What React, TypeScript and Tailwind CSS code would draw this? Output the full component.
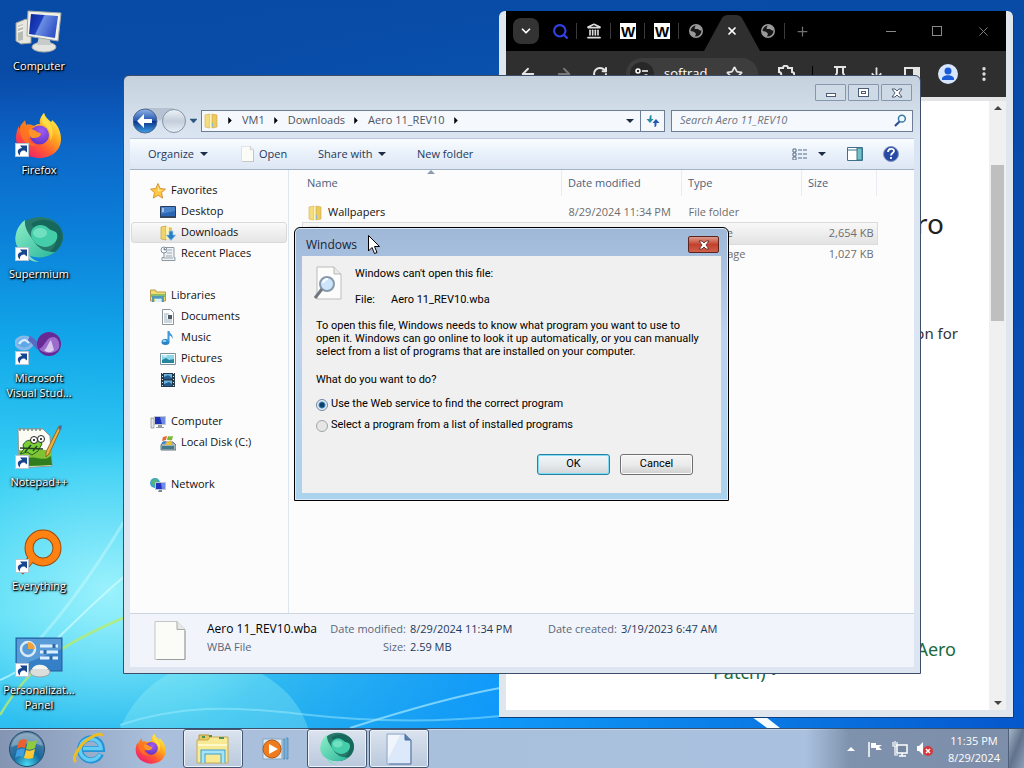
import { useState, type ReactNode } from "react";
import {
  ArrowDownToLine,
  ArrowLeft,
  ArrowRight,
  ChevronDown,
  EllipsisVertical,
  Landmark,
  Plus,
  RotateCw,
  Search,
  Star,
  X,
} from "lucide-react";

/* ---------- Application icons ---------- */

function FirefoxIcon({ className = "" }: { className?: string }) {
  return (
    <svg viewBox="0 0 48 48" className={className} aria-hidden="true">
      <defs>
        <linearGradient id="ffBody" x1="0.85" y1="0.1" x2="0.2" y2="0.95">
          <stop offset="0" stopColor="#fff04a" />
          <stop offset="0.35" stopColor="#ffa61e" />
          <stop offset="0.65" stopColor="#ff5a32" />
          <stop offset="1" stopColor="#f01c72" />
        </linearGradient>
        <radialGradient id="ffCore" cx="0.6" cy="0.3" r="0.8">
          <stop offset="0" stopColor="#a05cf0" />
          <stop offset="1" stopColor="#5b2fc4" />
        </radialGradient>
      </defs>
      <path
        d="M29 1c1 4 4 6 7 9 1-1 1-2 1-2 6 5 9 12 9 19 0 12-10 19-22 19S1 37 1 26c0-5 1-8 3-12 0 1 0 2 1 3 1-4 3-6 5-8l1 4c3-1 6 0 8 1 3-2 4-2 6-2-1-4 1-8 4-11z"
        fill="url(#ffBody)"
      />
      <path d="M5 14c2-3 4-5 5-6l1 5c4-1 7 1 8 2-3 1-4 3-3 5 2 1 5 1 6 2-2 4-6 4-9 4 1 5 5 7 9 7C12 36 4 27 5 14z" fill="#ff7a1c" opacity="0.75" />
      <circle cx="24.5" cy="23" r="9.5" fill="url(#ffCore)" />
      <path d="M14 17c4 0 6 1 8 3 2 1 4 1 4 2-1 4-6 4-9 4-3-2-4-5-3-9z" fill="#ff9429" />
      <path d="M29 1c-3 4-3 8-1 11 6 4 9 10 7 17 3-4 3-9 2-13-2-6-7-9-8-15z" fill="#ffe14a" opacity="0.85" />
    </svg>
  );
}

function SupermiumIcon({ className = "" }: { className?: string }) {
  return (
    <svg viewBox="0 0 48 48" className={className} aria-hidden="true">
      <defs>
        <linearGradient id="smLight" x1="0" y1="0" x2="1" y2="1">
          <stop offset="0" stopColor="#8ff0c8" />
          <stop offset="1" stopColor="#2cb79c" />
        </linearGradient>
      </defs>
      <ellipse cx="25" cy="21" rx="23" ry="20" fill="#277a6a" />
      <path d="M16 8c8-7 22-5 28 2 4 5 5 12 2 18-3 7-12 13-20 12 9-3 14-8 15-15-4-6-9-6-14-8-5-1-8-5-11-9z" fill="#17685c" />
      <path d="M10 4c-1 9 5 15 10 23 5 7 12 9 20 9-6 5-16 7-24 4C5 38-2 28 1 18 2 12 6 7 10 4z" fill="url(#smLight)" />
      <path d="M16 18c0-8 10-12 17-6 4 4 8 2 9 6 2 6-4 12-11 13-8 0-15-6-15-13z" fill="#43cda9" />
      <path d="M14 39c3 4 7 6 10 7-7 0-12-3-14-8z" fill="#82dec0" />
      <ellipse cx="25" cy="17" rx="7" ry="5" fill="#9cf3d7" opacity="0.5" />
    </svg>
  );
}

function ComputerIcon({ className = "" }: { className?: string }) {
  return (
    <svg viewBox="0 0 48 48" className={className} aria-hidden="true">
      <defs>
        <linearGradient id="pcScreen" x1="0" y1="0" x2="1" y2="0.4">
          <stop offset="0" stopColor="#0b2498" />
          <stop offset="0.45" stopColor="#1d3fbe" />
          <stop offset="0.5" stopColor="#6a8ee2" />
          <stop offset="1" stopColor="#3556c8" />
        </linearGradient>
      </defs>
      <path d="M1 15l10-4 5 2v22L6 36l-5-3z" fill="#e8e7df" stroke="#9b9c98" strokeWidth="1" />
      <path d="M3 18l5-2v16l-5 1z" fill="#b7bbb6" />
      <path d="M3 20l5-2M3 24l5-2" stroke="#f6f6f0" strokeWidth="1.5" />
      <ellipse cx="29" cy="39" rx="12" ry="5" fill="#e4e5e0" stroke="#a9acab" />
      <path d="M24 28h10l2 9H22z" fill="#c7cbc9" />
      <path d="M13 3l33 2-3 28-31-5z" fill="#f1f1e8" stroke="#a4a8a8" />
      <path d="M16 6l27 2-3 22-26-4z" fill="url(#pcScreen)" />
    </svg>
  );
}

function VisualStudioIcon({ className = "" }: { className?: string }) {
  return (
    <svg viewBox="0 0 48 48" className={className} aria-hidden="true">
      <ellipse cx="9" cy="23" rx="8" ry="6" fill="#5fa8e6" stroke="#86b9ea" strokeWidth="3" />
      <path d="M4 24c3-5 7-5 10-1" stroke="#d4ebfb" strokeWidth="2.500" fill="none" />
      <path d="M14 18c5 3 7 7 10 10" stroke="#5a68c2" strokeWidth="5" fill="none" />
      <circle cx="34" cy="24" r="12" fill="#672994" />
      <path d="M24 29c6-2 7-12 14-12 5 0 7 6 6 11-3 6-14 7-20 1z" fill="#9b6ccc" />
      <path d="M29 30c3-1 4-7 7-10l3 10c-3 3-7 3-10 0z" fill="#d9c7ed" />
    </svg>
  );
}

function NotepadPlusIcon({ className = "" }: { className?: string }) {
  return (
    <svg viewBox="0 0 48 48" className={className} aria-hidden="true">
      <path d="M3 5h25l7 7 2 30-33 2z" fill="#fbfdf4" stroke="#8f9891" />
      <path d="M4 26c10 3 20-4 32 2l1 13-33 2z" fill="#7fc234" />
      <path d="M12 35c8-5 16 4 24-3l1 9-25 1z" fill="#2f7d1f" />
      <path d="M8 21c3-6 9-6 12-2l4-3 3 4-4 7-6 4-5-3-7 2 4-5z" fill="#79cf35" stroke="#245f24" />
      <circle cx="19" cy="16" r="3.5" fill="#fff" stroke="#222" />
      <circle cx="26" cy="15" r="3.5" fill="#fff" stroke="#222" />
      <circle cx="19" cy="16" r="1" />
      <circle cx="26" cy="15" r="1" />
      <path d="M5 24l23 1M10 28l6-7M18 27l4-5" stroke="#234524" strokeWidth="1.5" />
      <path d="M5 4v3M9 4v3M13 4v3M17 4v3M21 4v3M25 4v3" stroke="#7d8a83" strokeWidth="1.5" />
      <path d="M44 2l2 2-12 26-3 3v-5z" fill="#efb03c" stroke="#8b6a28" />
      <path d="M43 5l2-4 2 1-1 4z" fill="#526b9c" />
    </svg>
  );
}

function EverythingIcon({ className = "" }: { className?: string }) {
  return (
    <svg viewBox="0 0 48 48" className={className} aria-hidden="true">
      <path d="M17 30L5 44" stroke="#9b4c0b" strokeWidth="8" />
      <circle cx="28" cy="20" r="14" fill="none" stroke="#9b4c0b" strokeWidth="9" />
      <circle cx="28" cy="20" r="14" fill="none" stroke="#ff8212" strokeWidth="7" />
      <path d="M18 29L6 43" stroke="#ff8212" strokeWidth="6" />
    </svg>
  );
}

function PersonalizeIcon({ className = "" }: { className?: string }) {
  return (
    <svg viewBox="0 0 48 48" className={className} aria-hidden="true">
      <rect x="1" y="6" width="46" height="33" fill="#347fc5" stroke="#245c9c" />
      <path d="M2 7h44v10L2 35z" fill="#79b3e4" opacity="0.55" />
      <circle cx="13" cy="17" r="7" fill="none" stroke="#d7ebfa" strokeWidth="2.5" />
      <path d="M13 10v7h7a7 7 0 0 0-7-7z" fill="#f2a43b" />
      <path d="M25 14h18M25 20h18M25 26h18" stroke="#d9efff" strokeWidth="3" />
      <path d="M39 12v4M30 18v4M36 24v4" stroke="#2b69aa" strokeWidth="3" />
      <ellipse cx="25" cy="40" rx="10" ry="5" fill="#dbdedb" stroke="#9fa4a2" />
      <path d="M17 37c2-5 13-6 16 0z" fill="#f4f4ef" />
    </svg>
  );
}

function ShortcutBadge() {
  return (
    <svg viewBox="0 0 14 14" className="absolute bottom-[3px] left-0 size-[14px]" aria-hidden="true">
      <rect x="0.5" y="0.5" width="13" height="13" fill="#fff" stroke="#b8c6d4" />
      <path d="M5 12.500C1 9 3 5 7 5L5 2.500h7v7L9.500 7.500C6 7.500 4.500 9.500 5 12.500z" fill="#17468f" />
    </svg>
  );
}

function FolderIcon({ className = "" }: { className?: string }) {
  return (
    <svg viewBox="0 0 16 16" className={className} aria-hidden="true">
      <path d="M2 2l5-1v14l-5-1z" fill="#f5dc7e" stroke="#dcb955" strokeWidth="0.7" />
      <path d="M7 2h4v13H7z" fill="#fff5bf" />
      <path d="M9 1l5 1v12l-5 1z" fill="#eacb5c" stroke="#d5ae4d" strokeWidth="0.7" />
      <path d="M9 10h1v4H9z" fill="#8fb4d0" />
    </svg>
  );
}

function DocIcon({ className = "" }: { className?: string }) {
  return (
    <svg viewBox="0 0 32 40" className={className} aria-hidden="true">
      <path d="M1 1h22l8 8v30H1z" fill="#fbfbf8" stroke="#c3c6c5" />
      <path d="M23 1v8h8" fill="#e5e8e6" stroke="#a5a9a8" />
      <path d="M31 10v29H3" fill="none" stroke="#989d9c" />
    </svg>
  );
}

/* ---------- Navigation pane icons ---------- */

function StarIcon() {
  return (
    <svg viewBox="0 0 16 16" className="size-4" aria-hidden="true">
      <path d="M8 0.500l2.200 5 5.300.6-4 3.600 1.200 5.400L8 12.300l-4.700 2.800 1.200-5.400-4-3.600 5.300-.6z" fill="#ffc844" stroke="#c98323" strokeWidth="0.800" />
      <path d="M8 3l1 4 3 .5-4 1z" fill="#fff0a5" />
    </svg>
  );
}

function DesktopIcon() {
  return (
    <svg viewBox="0 0 16 16" className="size-4" aria-hidden="true">
      <path d="M0.500 2.500h15v10h-15z" fill="#2a66b4" stroke="#263c60" />
      <path d="M1 3h14v4L1 10z" fill="#4a85c9" />
      <path d="M0 12h16v2H0z" fill="#34465f" />
      <path d="M2 5h2M2 7h2" stroke="#fff" />
    </svg>
  );
}

function DownloadsIcon() {
  return (
    <svg viewBox="0 0 16 16" className="size-4" aria-hidden="true">
      <path d="M1 2l5-1v14l-5-1z" fill="#f1d469" stroke="#c7a03a" strokeWidth="0.7" />
      <path d="M6 2h4v12H6z" fill="#fff1ae" />
      <path d="M9 2l3 1v6H9z" fill="#e4c353" />
      <path d="M9 6h4v4h3l-5 5.500L6 10h3z" fill="#2b7dc4" stroke="#9fd0f0" strokeWidth="0.700" />
    </svg>
  );
}

function RecentIcon() {
  return (
    <svg viewBox="0 0 16 16" className="size-4" aria-hidden="true">
      <path d="M4 1.500h10v10h1v3H2v-3h2z" fill="#eff2f5" stroke="#8f99a2" />
      <circle cx="4" cy="4" r="3" fill="#fff" stroke="#7d91a5" />
      <path d="M4 2v2h2M8 4h4M7 7h5M6 10h6M4 12h9" stroke="#9aa7b3" />
    </svg>
  );
}

function LibrariesIcon() {
  return (
    <svg viewBox="0 0 16 16" className="size-4" aria-hidden="true">
      <path d="M0.500 2h5l1 2h9v9h-15z" fill="#f4dc73" stroke="#bb9b45" />
      <path d="M1 6h14v3H1z" fill="#87bf6d" />
      <path d="M2 8h12v3H2z" fill="#68b8dc" />
      <path d="M3 14V9h10v5" fill="none" stroke="#5897b6" strokeWidth="2" />
      <path d="M5 14v-3h6v3z" fill="#d8f2fa" />
    </svg>
  );
}

function DocumentsIcon() {
  return (
    <svg viewBox="0 0 16 16" className="size-4" aria-hidden="true">
      <path d="M2.500.5h8l3 3v12h-11z" fill="#fff" stroke="#8d949c" />
      <path d="M4 5h5M4 7h3M4 9h3M4 11h8M4 13h8" stroke="#9cacba" />
      <path d="M8 6h4v4H8z" fill="#4e5968" />
    </svg>
  );
}

function MusicIcon() {
  return (
    <svg viewBox="0 0 16 16" className="size-4" aria-hidden="true">
      <ellipse cx="5.500" cy="12" rx="4" ry="3" fill="#2882c7" />
      <path d="M7.500 12V1h2c0 3 4 3 3 8-1-3-2-3-3-3.500V12z" fill="#3d9bda" />
      <ellipse cx="4.500" cy="11" rx="2" ry="1" fill="#9cd8f5" />
    </svg>
  );
}

function PicturesIcon() {
  return (
    <svg viewBox="0 0 16 16" className="size-4" aria-hidden="true">
      <path d="M.5 2.500h15v11H.5z" fill="#f7fafb" stroke="#7e929e" />
      <path d="M2 4h12v8H2z" fill="#8dd6ea" />
      <path d="M2 9l4-2 3 2 5-1v4H2z" fill="#26869b" />
      <path d="M3 5h4" stroke="#fff" />
    </svg>
  );
}

function VideosIcon() {
  return (
    <svg viewBox="0 0 16 16" className="size-4" aria-hidden="true">
      <path d="M1 1h14v14H1z" fill="#263947" />
      <path d="M4 2h8v5H4zM4 8.500h8v5H4z" fill="#6db3e0" />
      <path d="M4 5l4-2 4 3v1H4zM4 12l5-2 3 2v2H4z" fill="#245c91" />
      <path d="M2.500 1v14M13.500 1v14" stroke="#dce6eb" strokeDasharray="1 2" />
    </svg>
  );
}

function SmallComputerIcon() {
  return (
    <svg viewBox="0 0 16 16" className="size-4" aria-hidden="true">
      <path d="M1 4h3v10H1z" fill="#e5e6e4" stroke="#82878c" strokeWidth="0.7" />
      <path d="M4.500 2.500h11v8h-11z" fill="#1f31b4" stroke="#c2c7ce" />
      <path d="M10 3h5v7h-3z" fill="#6d8ae0" />
      <path d="M8 11h4v2h2v1H6v-1h2z" fill="#929aa4" />
    </svg>
  );
}

function DiskIcon() {
  return (
    <svg viewBox="0 0 16 16" className="size-4" aria-hidden="true">
      <path d="M1 10l2-3h10l3 3v5H1z" fill="#a4b3b7" stroke="#64797e" />
      <path d="M2 11h12v3H2z" fill="#3e7c8a" />
      <path d="M3 2l4-1-1 4-4 1z" fill="#e8682f" />
      <path d="M8 1c2 1 3 0 5 0l-1 4c-2 1-3 0-5 0z" fill="#78ba36" />
      <path d="M2 7l4-1-1 3H2z" fill="#3d87ce" />
      <path d="M7 6c2 1 3 0 5 0l-1 4H6z" fill="#efbd30" />
    </svg>
  );
}

function NetworkIcon() {
  return (
    <svg viewBox="0 0 16 16" className="size-4" aria-hidden="true">
      <circle cx="5" cy="6" r="5" fill="#39a3cc" />
      <path d="M1 4c3 0 3-3 7-2 0 3-3 4-3 7-2-1-4-2-4-5z" fill="#55b47d" />
      <path d="M5.500 5.500h10v7h-10z" fill="#2034bd" stroke="#bcc7d6" />
      <path d="M11 6h4v6h-3z" fill="#718be6" />
      <path d="M9 13h3v2H8z" fill="#7b8997" />
    </svg>
  );
}

/* ---------- Wallpaper ---------- */

function Wallpaper() {
  return (
    <svg viewBox="0 0 1024 768" preserveAspectRatio="none" className="absolute inset-0 size-full" aria-hidden="true">
      <defs>
        <linearGradient id="sky" x1="0" y1="0" x2="0" y2="1">
          <stop offset="0" stopColor="#0a4aa4" />
          <stop offset="0.14" stopColor="#0c5cc0" />
          <stop offset="0.3" stopColor="#0b7fd8" />
          <stop offset="0.45" stopColor="#12a9ea" />
          <stop offset="0.6" stopColor="#35cdf3" />
          <stop offset="0.8" stopColor="#4fdaf4" />
          <stop offset="1" stopColor="#1fb4ee" />
        </linearGradient>
        <linearGradient id="skyRight" x1="0" y1="0" x2="1" y2="0">
          <stop offset="0" stopColor="#0a80ee" stopOpacity="0" />
          <stop offset="0.2" stopColor="#0a80ee" stopOpacity="0.05" />
          <stop offset="0.48" stopColor="#0a92fa" stopOpacity="0.85" />
          <stop offset="1" stopColor="#0556cc" />
        </linearGradient>
        <linearGradient id="skyTop" x1="0" y1="0" x2="0" y2="1">
          <stop offset="0" stopColor="#084ba6" />
          <stop offset="0.5" stopColor="#084ba6" stopOpacity="0.9" />
          <stop offset="1" stopColor="#0b5abc" stopOpacity="0" />
        </linearGradient>
        <linearGradient id="skyEdge" x1="0" y1="0" x2="0" y2="1">
          <stop offset="0" stopColor="#084ba6" />
          <stop offset="0.55" stopColor="#084cb0" stopOpacity="0.8" />
          <stop offset="1" stopColor="#0a60d0" stopOpacity="0" />
        </linearGradient>
        <radialGradient id="glow">
          <stop offset="0" stopColor="#b6fbff" stopOpacity="0.75" />
          <stop offset="1" stopColor="#a8f4ff" stopOpacity="0" />
        </radialGradient>
      </defs>
      <rect width="1024" height="768" fill="url(#sky)" />
      <rect width="1024" height="768" fill="url(#skyRight)" />
      <rect width="1024" height="150" fill="url(#skyTop)" />
      <rect x="980" y="20" width="44" height="748" fill="url(#skyEdge)" />
      <ellipse cx="110" cy="590" rx="190" ry="150" fill="url(#glow)" />
      <path d="M120 728C150 660 220 650 262 674C290 690 302 710 308 728z" fill="#9ff5f5" opacity="0.3" />
      <path d="M0 680C40 665 80 610 135 568" stroke="#dcffff" strokeWidth="2" opacity="0.6" fill="none" />
      <path d="M20 660C60 620 95 570 125 520" stroke="#dcffff" strokeWidth="3" opacity="0.35" fill="none" />
      <path d="M0 715C30 665 60 645 123 618" stroke="#b6ec6a" strokeWidth="2.500" opacity="0.8" fill="none" />
      <path d="M120 725C180 705 230 706 300 714S440 722 500 716" stroke="#a6efff" strokeWidth="2" opacity="0.45" fill="none" />
      <path d="M350 728C400 712 450 697 500 688" stroke="#a6e8ff" strokeWidth="2" opacity="0.7" fill="none" />
      <path d="M752 717h14l14 11h-13z" fill="#f4fcff" />
    </svg>
  );
}

/* ---------- Desktop shortcuts ---------- */

const shortcuts: { lines: string[]; icon: ReactNode; badge: boolean }[] = [
  { lines: ["Computer"], icon: <ComputerIcon className="size-12" />, badge: false },
  { lines: ["Firefox"], icon: <FirefoxIcon className="size-12" />, badge: true },
  { lines: ["Supermium"], icon: <SupermiumIcon className="size-12" />, badge: true },
  { lines: ["Microsoft", "Visual Stud..."], icon: <VisualStudioIcon className="size-12" />, badge: true },
  { lines: ["Notepad++"], icon: <NotepadPlusIcon className="size-12" />, badge: true },
  { lines: ["Everything"], icon: <EverythingIcon className="size-12" />, badge: true },
  { lines: ["Personalizat...", "Panel"], icon: <PersonalizeIcon className="size-12" />, badge: true },
];

function DesktopShortcuts() {
  return (
    <ul className="relative flex w-[78px] flex-col pt-2">
      {shortcuts.map((s) => (
        <li key={s.lines[0]} className="flex h-[104px] flex-col items-center gap-[2px]">
          <span className="relative">
            {s.icon}
            {s.badge && <ShortcutBadge />}
          </span>
          <span className="text-center leading-[15px] whitespace-nowrap text-white [text-shadow:1px_1px_1px_#000,1px_1px_2px_#000,0_0_3px_#000]">
            {s.lines.map((l) => (
              <span key={l} className="block">
                {l}
              </span>
            ))}
          </span>
        </li>
      ))}
    </ul>
  );
}

/* ---------- Browser window ---------- */

function TabCell({ children, divider = false, label }: { children: ReactNode; divider?: boolean; label: string }) {
  return (
    <button
      type="button"
      aria-label={label}
      className="relative flex h-full w-[34px] items-center justify-center text-[#a2a2a2]"
    >
      {children}
      {divider && <span className="absolute right-0 h-4 w-px bg-[#3b3b3b]" />}
    </button>
  );
}

function LetterMark() {
  return (
    <span className="flex size-4 items-center justify-center bg-white font-['Liberation_Sans',sans-serif] text-[15px] leading-none font-bold text-black">
      W
    </span>
  );
}

function EarthIcon() {
  return (
    <svg viewBox="0 0 16 16" className="size-4" aria-hidden="true">
      <circle cx="8" cy="8" r="6.200" fill="#161616" stroke="#9a9a9a" strokeWidth="1.600" />
      <path d="M2 8c3 0 5 1 6 3 0 1-1 1-1 3C4 13 2 11 2 8zM8 2c3 0 5 2 6 5-2 1-3 0-4-1H7c-1-1 0-2 1-4z" fill="#9a9a9a" />
    </svg>
  );
}

function ToolCell({ children, label }: { children: ReactNode; label: string }) {
  return (
    <button type="button" aria-label={label} className="flex h-7 w-9 items-center justify-center text-[#e4e4e4]">
      {children}
    </button>
  );
}

function BrowserWindow() {
  return (
    <section
      aria-label="Browser"
      className="absolute top-[11px] left-[499px] flex h-[707px] w-[515px] flex-col rounded-t-md border-r border-b border-[#0c3d80] bg-[#dfe6ee] px-[7px] pb-[7px]"
    >
      <header className="flex h-10 shrink-0 items-center bg-black pl-[7px]">
        <button
          type="button"
          aria-label="Search tabs"
          className="mr-1 flex size-[26px] items-center justify-center rounded-lg bg-[#333] text-white"
        >
          <ChevronDown className="size-[14px]" strokeWidth={3} />
        </button>
        <TabCell label="Search tab" divider>
          <Search className="size-[17px] text-[#3242e8]" strokeWidth={3} />
        </TabCell>
        <TabCell label="Archive tab" divider>
          <Landmark className="size-4 text-[#ddd]" strokeWidth={2.5} />
        </TabCell>
        <TabCell label="Wiki tab" divider>
          <LetterMark />
        </TabCell>
        <TabCell label="Wiki tab" divider>
          <LetterMark />
        </TabCell>
        <TabCell label="Site tab">
          <EarthIcon />
        </TabCell>
        <button
          type="button"
          aria-label="Close tab"
          className="relative flex h-full w-[38px] items-center justify-center text-white"
        >
          <svg viewBox="0 0 56 36" className="absolute bottom-0 left-[-9px] h-9 w-14" aria-hidden="true">
            <path d="M0 36L18 3q2-3 6-3h8q4 0 6 3l18 33z" fill="#2f2f2f" />
          </svg>
          <X className="relative size-3" strokeWidth={3.5} />
        </button>
        <TabCell label="Site tab" divider>
          <EarthIcon />
        </TabCell>
        <TabCell label="New tab">
          <Plus className="size-[15px] text-[#707070]" />
        </TabCell>
        <span className="ml-auto flex h-full">
          <button type="button" aria-label="Minimize" className="flex w-[46px] items-center justify-center">
            <span className="h-px w-[10px] bg-[#8a8a8a]" />
          </button>
          <button type="button" aria-label="Maximize" className="flex w-[46px] items-center justify-center">
            <span className="size-[10px] border border-[#8a8a8a]" />
          </button>
          <button type="button" aria-label="Close" className="flex w-[46px] items-center justify-center text-[#8a8a8a]">
            <X className="size-[15px]" strokeWidth={1.5} />
          </button>
        </span>
      </header>

      <div className="flex h-[46px] shrink-0 items-center bg-[#2f2f2f] pl-1">
        <ToolCell label="Back">
          <ArrowLeft className="size-[18px]" strokeWidth={2.5} />
        </ToolCell>
        <ToolCell label="Forward">
          <ArrowRight className="size-[18px] text-[#777]" strokeWidth={2.5} />
        </ToolCell>
        <ToolCell label="Reload">
          <RotateCw className="size-4" strokeWidth={3} />
        </ToolCell>
        <div className="mr-[10px] ml-2 flex h-8 w-[132px] items-center rounded-full bg-[#3d3d3d] px-1">
          <span className="flex size-6 items-center justify-center rounded-full bg-[#282828]">
            <svg viewBox="0 0 14 14" className="size-[14px]" aria-hidden="true">
              <circle cx="3" cy="4" r="2" fill="none" stroke="#fff" strokeWidth="1.500" />
              <path d="M7 4h6M1 10h6" stroke="#fff" strokeWidth="1.500" />
              <circle cx="11" cy="10" r="2" fill="none" stroke="#fff" strokeWidth="1.500" />
            </svg>
          </span>
          <input
            aria-label="Address"
            defaultValue="softrad"
            className="ml-[10px] w-[58px] min-w-0 bg-transparent text-[13px] text-white outline-none"
          />
          <Star className="ml-1 size-[17px] text-[#e4e4e4]" strokeWidth={2.5} />
        </div>
        <ToolCell label="Extensions">
          <svg viewBox="0 0 18 18" className="size-[18px]" aria-hidden="true">
            <path d="M2 3h4c0-3 5-3 5 0h4v4c3 0 3 5 0 5v4H2v-4c3 0 3-5 0-5z" fill="none" stroke="#e4e4e4" strokeWidth="2" />
          </svg>
        </ToolCell>
        <span className="mr-[9px] ml-[8px] h-4 w-px bg-black" />
        <ToolCell label="Labs">
          <svg viewBox="0 0 16 18" className="h-[18px] w-4" aria-hidden="true">
            <path d="M2 2h12M5 2v6l-4 8h14l-4-8V2" fill="none" stroke="#e4e4e4" strokeWidth="2" />
          </svg>
        </ToolCell>
        <ToolCell label="Downloads">
          <ArrowDownToLine className="size-[17px]" strokeWidth={2.5} />
        </ToolCell>
        <ToolCell label="Side panel">
          <svg viewBox="0 0 16 14" className="h-[14px] w-4" aria-hidden="true">
            <path d="M1 1h14v12H1z" fill="none" stroke="#e4e4e4" strokeWidth="2" />
            <path d="M9 1h6v12H9z" fill="#e4e4e4" />
          </svg>
        </ToolCell>
        <ToolCell label="Profile">
          <svg viewBox="0 0 20 20" className="size-5" aria-hidden="true">
            <circle cx="10" cy="10" r="10" fill="#d7e6fd" />
            <circle cx="10" cy="7" r="3.500" fill="#1a5cd8" />
            <path d="M4 15c0-5 12-5 12 0v1H4z" fill="#1a5cd8" />
          </svg>
        </ToolCell>
        <ToolCell label="Menu">
          <EllipsisVertical className="size-[18px]" strokeWidth={2.5} />
        </ToolCell>
      </div>

      <div className="flex min-h-0 flex-1 border-t-4 border-[#e4e4e6] bg-white">
        <article className="flex min-w-0 flex-1 flex-col items-end font-['Noto_Sans','Open_Sans',sans-serif]">
          <h1 className="mt-[103px] mr-[45px] text-[28px] leading-[38px] text-[#222]">Aero</h1>
          <p className="mt-[81px] mr-[31px] text-[15px] leading-5 text-[#333]">application for</p>
          <a href="#patch" className="mt-[295px] mr-[33px] text-[18px] leading-[23px] text-[#1b6a3e]">
            Aero
          </a>
          <a href="#patch" className="mr-[212px] text-[18px] leading-[23px] text-[#1b6a3e]">
            Patch) •
          </a>
        </article>
        <div className="flex w-[17px] flex-col items-center justify-between bg-[#f0f0f0] py-[5px]">
          <span className="border-x-4 border-b-4 border-transparent border-b-[#444]" />
          <span className="mt-[55px] mb-auto h-[156px] w-[13px] bg-[#bfbfbf]" />
          <span className="border-x-4 border-t-4 border-transparent border-t-[#444]" />
        </div>
      </div>
    </section>
  );
}

/* ---------- Explorer window ---------- */

type Place = { name: string; icon: ReactNode };
const places: { head: Place; items: Place[] }[] = [
  {
    head: { name: "Favorites", icon: <StarIcon /> },
    items: [
      { name: "Desktop", icon: <DesktopIcon /> },
      { name: "Downloads", icon: <DownloadsIcon /> },
      { name: "Recent Places", icon: <RecentIcon /> },
    ],
  },
  {
    head: { name: "Libraries", icon: <LibrariesIcon /> },
    items: [
      { name: "Documents", icon: <DocumentsIcon /> },
      { name: "Music", icon: <MusicIcon /> },
      { name: "Pictures", icon: <PicturesIcon /> },
      { name: "Videos", icon: <VideosIcon /> },
    ],
  },
  { head: { name: "Computer", icon: <SmallComputerIcon /> }, items: [{ name: "Local Disk (C:)", icon: <DiskIcon /> }] },
  { head: { name: "Network", icon: <NetworkIcon /> }, items: [] },
];

const files = [
  { id: 1, name: "Wallpapers", date: "8/29/2024 11:34 PM", type: "File folder", size: "", selected: false },
  { id: 2, name: "", date: "", type: "WBA File", size: "2,654 KB", selected: true },
  { id: 3, name: "", date: "", type: "PNG image", size: "1,027 KB", selected: false },
];

function Triangle({ className = "" }: { className?: string }) {
  return (
    <svg viewBox="0 0 8 4" className={`h-1 w-2 ${className}`} aria-hidden="true">
      <path d="M0 0h8L4 4z" fill="#1c2c44" />
    </svg>
  );
}

function Crumb({ label }: { label?: string }) {
  return (
    <>
      {label && <button type="button">{label}</button>}
      <svg viewBox="0 0 4 8" className="mr-[10px] ml-[9px] h-[7px] w-1" aria-hidden="true">
        <path d="M0 0l4 4-4 4z" fill="#000" />
      </svg>
    </>
  );
}

function CaptionButton({ label, children }: { label: string; children: ReactNode }) {
  return (
    <button
      type="button"
      aria-label={label}
      className="flex h-[17px] w-[31px] items-center justify-center rounded-[1px] border border-[#8696ad] bg-[#cfdae7]"
    >
      {children}
    </button>
  );
}

function ExplorerWindow() {
  return (
    <section
      aria-label="Aero 11_REV10"
      className="absolute top-[75px] left-[123px] flex h-[599px] w-[798px] flex-col rounded-t-md border border-[#3b4d68] bg-linear-to-b from-[#c6d1de] via-[#dbe5f2] via-10% to-[#dce5f0] px-[6px] pb-[6px]"
    >
      <header className="flex h-[27px] shrink-0 items-start justify-end gap-[2px] pt-2 pr-[2px]">
        <CaptionButton label="Minimize">
          <span className="mt-1 h-1 w-[10px] border border-[#4c5b75] bg-white" />
        </CaptionButton>
        <CaptionButton label="Restore">
          <span className="flex h-[9px] w-[11px] items-center justify-center border border-[#4c5b75] bg-white">
            <span className="h-[3px] w-[5px] border border-[#4c5b75]" />
          </span>
        </CaptionButton>
        <CaptionButton label="Close">
          <svg viewBox="0 0 12 10" className="h-[10px] w-3" aria-hidden="true">
            <path d="M1 1h3l2 2 2-2h3L8 5l3 4H8L6 7 4 9H1l3-4z" fill="#fff" stroke="#4c5b75" />
          </svg>
        </CaptionButton>
      </header>

      <div className="flex h-[35px] shrink-0 items-center pr-[1px] pl-[3px]">
        <svg viewBox="0 0 64 28" className="h-7 w-16 shrink-0" role="img" aria-label="Back and forward">
          <defs>
            <linearGradient id="backFill" x1="0" y1="0" x2="0" y2="1">
              <stop offset="0" stopColor="#8fb5e6" />
              <stop offset="0.48" stopColor="#2456b0" />
              <stop offset="0.5" stopColor="#0a2f86" />
              <stop offset="1" stopColor="#3ea2e8" />
            </linearGradient>
            <linearGradient id="fwdFill" x1="0" y1="0" x2="0" y2="1">
              <stop offset="0" stopColor="#eef3f8" />
              <stop offset="0.5" stopColor="#c3cedb" />
              <stop offset="1" stopColor="#e7eef6" />
            </linearGradient>
          </defs>
          <path d="M12 1h29L27 14z" fill="#a3b1c2" opacity="0.6" />
          <circle cx="12" cy="14" r="12" fill="url(#backFill)" stroke="#50668b" />
          <circle cx="41" cy="14" r="11.500" fill="url(#fwdFill)" stroke="#8493a8" />
          <path d="M11 7l-7 7 7 7v-5h8v-4h-8z" fill="#fff" />
          <path d="M57 12h7l-3.500 4z" fill="#28557e" stroke="#28557e" strokeWidth="0.5" />
        </svg>
        <div className="ml-1 flex h-[22px] min-w-0 flex-1 items-center border border-[#6d7d95] bg-[#f5f9fd] pl-[1px] text-[#4d5360]">
          <FolderIcon className="size-4" />
          <Crumb />
          <Crumb label="VM1" />
          <Crumb label="Downloads" />
          <Crumb label="Aero 11_REV10" />
          <button type="button" aria-label="Previous locations" className="ml-auto px-[6px]">
            <Triangle />
          </button>
          <button
            type="button"
            aria-label="Refresh"
            className="flex h-full w-6 items-center justify-center border-l border-[#6d7d95]"
          >
            <svg viewBox="0 0 16 16" className="size-4" aria-hidden="true">
              <path d="M6.500 2c-2 0-2 2-2 4H1.500L5 10l3.500-4h-2z" fill="#258b9c" />
              <path d="M9.500 14c2 0 2-2 2-4h3L11 6 7.500 10h2z" fill="#2557b8" />
            </svg>
          </button>
        </div>
        <label className="ml-[6px] flex h-[22px] w-[242px] items-center border border-[#6d7d95] bg-[#f5f9fd] px-[5px]">
          <input
            type="search"
            aria-label="Search Aero 11_REV10"
            placeholder="Search Aero 11_REV10"
            className="min-w-0 flex-1 bg-transparent pl-[3px] italic outline-none placeholder:text-[#6d7480]"
          />
          <svg viewBox="0 0 14 14" className="size-[13px]" aria-hidden="true">
            <circle cx="8.500" cy="5" r="3.700" fill="#eef8ff" stroke="#397b9c" strokeWidth="1.600" />
            <path d="M6 8l-5 5" stroke="#2a4f96" strokeWidth="2.200" />
          </svg>
        </label>
      </div>

      <div className="flex h-8 shrink-0 items-center border-y border-t-[#b9c8da] border-b-[#a3b2c6] bg-linear-to-b from-[#fafdff] via-[#e8f0fa] via-50% to-[#dde7f4] pl-[18px] text-[#1e395b]">
        <button type="button" className="flex w-[93px] items-center gap-[6px]">
          Organize <Triangle />
        </button>
        <button type="button" className="flex w-[77px] items-center gap-[5px]">
          <DocIcon className="h-4 w-[13px]" /> Open
        </button>
        <button type="button" className="flex w-[99px] items-center gap-[6px]">
          Share with <Triangle />
        </button>
        <button type="button">New folder</button>
        <span className="ml-auto flex items-center pr-[15px]">
          <button type="button" aria-label="Change view" className="flex items-center">
            <svg viewBox="0 0 16 12" className="h-3 w-4" aria-hidden="true">
              <path d="M1 1h3v3H1zM1 5h3v3H1zM1 9h3v3H1z" fill="#fff" stroke="#536b87" />
              <path d="M6 2h4M11 2h4M6 6h4M11 6h4M6 10h4M11 10h4" stroke="#536b87" />
            </svg>
            <Triangle className="mx-[10px]" />
          </button>
          <button type="button" aria-label="Preview pane" className="mr-5 ml-[11px]">
            <svg viewBox="0 0 16 14" className="h-[14px] w-4" aria-hidden="true">
              <path d="M.5.5h15v13H.5z" fill="#fff" stroke="#3f7189" />
              <path d="M1 3h9" stroke="#3f7189" />
              <path d="M10 1h5v12h-5z" fill="#6fc3c6" stroke="#3f7189" />
            </svg>
          </button>
          <button type="button" aria-label="Help">
            <svg viewBox="0 0 16 16" className="size-4" aria-hidden="true">
              <circle cx="8" cy="8" r="7.500" fill="#274ba5" stroke="#8296bf" />
              <path d="M5 6c0-4 6-4 6-1 0 2-3 2-3 4.500M8 11v2" fill="none" stroke="#fff" strokeWidth="1.800" />
            </svg>
          </button>
        </span>
      </div>

      <div className="flex min-h-0 flex-1 bg-[#fcfcfc]">
        <nav aria-label="Places" className="flex w-[159px] shrink-0 flex-col gap-[21px] border-r border-[#dde5ef] pt-[10px] text-[#111]">
          {places.map((group) => (
            <div key={group.head.name}>
              <a href="#place" className="flex h-[21px] items-center gap-[5px] pl-5">
                {group.head.icon}
                {group.head.name}
              </a>
              <ul>
                {group.items.map((item) => (
                  <li
                    key={item.name}
                    className={
                      item.name === "Downloads"
                        ? "mx-[1px] rounded-[3px] border border-[#d9d9d9] bg-linear-to-b from-[#fafafa] to-[#e5e5e5]"
                        : "mx-[1px] border border-transparent"
                    }
                  >
                    <a href="#place" className="flex h-[19px] items-center gap-[5px] pl-7">
                      {item.icon}
                      {item.name}
                    </a>
                  </li>
                ))}
              </ul>
            </div>
          ))}
        </nav>

        <div className="flex min-w-0 flex-1 pr-[37px] pl-[14px]">
          <table className="w-full table-fixed self-start text-left text-[#6d6d6d]">
            <colgroup>
              <col />
              <col className="w-[120px]" />
              <col className="w-[120px]" />
              <col className="w-[75px]" />
            </colgroup>
            <thead>
              <tr className="h-[26px] text-[#4c607a]">
                <th className="relative pl-1 font-normal">
                  Name
                  <svg viewBox="0 0 8 4" className="absolute top-0 left-[124px] h-1 w-2" aria-hidden="true">
                    <path d="M0 4l4-4 4 4z" fill="#8b9bb0" />
                  </svg>
                </th>
                <th className="border-l border-[#e9edf2] pl-[6px] font-normal">Date modified</th>
                <th className="border-l border-[#e9edf2] pl-[6px] font-normal">Type</th>
                <th className="border-x border-[#e9edf2] pl-[6px] font-normal">Size</th>
              </tr>
              <tr className="h-[6px]" />
            </thead>
            <tbody>
              {files.map((f) => (
                <tr
                  key={f.id}
                  className={
                    f.selected ? "h-[21px] bg-linear-to-b from-[#f8f8f8] to-[#e3e3e3] outline outline-[#dcdcdc]" : "h-[21px]"
                  }
                >
                  <td className="pl-1 text-[#111]">
                    <span className="flex items-center gap-[5px]">
                      {f.id === 1 ? <FolderIcon className="size-4" /> : <DocIcon className="h-4 w-4" />}
                      {f.name}
                    </span>
                  </td>
                  <td className="pl-[7px] whitespace-nowrap">{f.date}</td>
                  <td className="pl-[7px] whitespace-nowrap">{f.type}</td>
                  <td className="pr-[3px] text-right whitespace-nowrap">{f.size}</td>
                </tr>
              ))}
            </tbody>
          </table>
        </div>
      </div>

      <footer className="flex h-[54px] shrink-0 gap-[21px] border-t border-[#ccd6e2] bg-[#f1f4fa] pt-[6px] pl-6 leading-[18px] text-[#5a6779]">
        <DocIcon className="h-[41px] w-8 shrink-0" />
        <dl className="grid grid-cols-[117px_78px_134px_69px_auto] content-start gap-x-1 whitespace-nowrap">
          <dt className="text-[12px] text-black">Aero 11_REV10.wba</dt>
          <dt className="text-right">Date modified:</dt>
          <dd className="text-[#1e395b]">8/29/2024 11:34 PM</dd>
          <dt>Date created:</dt>
          <dd className="text-[#1e395b]">3/19/2023 6:47 AM</dd>
          <dt>WBA File</dt>
          <dt className="text-right">Size:</dt>
          <dd className="text-[#1e395b]">2.59 MB</dd>
        </dl>
      </footer>
    </section>
  );
}

/* ---------- Open-with dialog ---------- */

function RadioOption({ label, checked, onSelect }: { label: string; checked: boolean; onSelect: () => void }) {
  return (
    <label className="flex h-[21px] items-center gap-[3px]">
      <input
        type="radio"
        name="program"
        checked={checked}
        onChange={onSelect}
        className="size-3 appearance-none rounded-full border border-[#a2a4a5] bg-[#e6e6e6] checked:border-[#6d87a1] checked:bg-[radial-gradient(circle,#123f68_0_2px,#3c8ac4_3px,#e9eff4_4px)]"
      />
      {label}
    </label>
  );
}

function OpenWithDialog() {
  const [choice, setChoice] = useState(0);
  return (
    <section
      role="dialog"
      aria-label="Windows"
      className="absolute top-[227px] left-[294px] flex h-[274px] w-[435px] flex-col rounded-t-md border border-black bg-linear-to-b from-[#9fb8d8] via-[#bcd3ef] via-40% to-[#abd2ec] px-[7px] pb-[7px] text-black shadow-[inset_0_0_0_1px_#d9ecfb]"
    >
      <header className="flex h-7 shrink-0 justify-between pt-2 pr-[2px] pl-1 text-[#17233a]">
        <h2 className="text-[12px] leading-[18px]">Windows</h2>
        <button
          type="button"
          aria-label="Close"
          className="flex h-[17px] w-[31px] items-center justify-center rounded-[2px] border border-[#5b2420] bg-linear-to-b from-[#dd9a8c] via-[#c2402c] via-50% to-[#d0604a]"
        >
          <svg viewBox="0 0 12 10" className="h-[10px] w-3" aria-hidden="true">
            <path d="M1 1h3l2 2 2-2h3L8 5l3 4H8L6 7 4 9H1l3-4z" fill="#fff" stroke="#6f3530" />
          </svg>
        </button>
      </header>
      <div className="flex min-h-0 flex-1 flex-col bg-[#f0f0f0] pt-[10px] pr-7 pl-[14px] font-['Roboto','Liberation_Sans',sans-serif]">
        <div className="-ml-[2px] flex gap-[13px]">
          <svg viewBox="0 0 28 34" className="h-[34px] w-7 shrink-0" aria-hidden="true">
            <path d="M3 1h17l7 7v25H3z" fill="#fcfdfb" stroke="#b8bdbb" />
            <path d="M20 1v7h7" fill="#e8eae6" stroke="#b3b8b5" />
            <circle cx="13" cy="18" r="7" fill="#cde4fa" stroke="#8899ac" strokeWidth="2" />
            <path d="M8 23l-7 9" stroke="#70777e" strokeWidth="3" />
            <path d="M9 17c1-3 3-4 5-4" stroke="#fff" strokeWidth="2" fill="none" />
          </svg>
          <div className="flex flex-col gap-[13px] pt-[1px] leading-[13px]">
            <p>Windows can&#39;t open this file:</p>
            <p className="flex">
              <span className="w-9">File:</span> Aero 11_REV10.wba
            </p>
          </div>
        </div>
        <p className="mt-[13px] leading-[13px] whitespace-nowrap">
          To open this file, Windows needs to know what program you want to use to
          <br />
          open it. Windows can go online to look it up automatically, or you can manually
          <br />
          select from a list of programs that are installed on your computer.
        </p>
        <p className="mt-[15px] mb-[8px] leading-[13px]">What do you want to do?</p>
        <RadioOption label="Use the Web service to find the correct program" checked={choice === 0} onSelect={() => setChoice(0)} />
        <RadioOption label="Select a program from a list of installed programs" checked={choice === 1} onSelect={() => setChoice(1)} />
        <div className="mt-[18px] flex justify-end gap-[10px]">
          <button
            type="button"
            className="h-[21px] w-[73px] rounded-[3px] border border-[#2c7fa0] bg-linear-to-b from-[#f0f6f9] via-[#e6eaed] via-50% to-[#d2d6da] shadow-[inset_0_0_0_1px_#7fdcf5]"
          >
            OK
          </button>
          <button
            type="button"
            className="h-[21px] w-[73px] rounded-[3px] border border-[#707070] bg-linear-to-b from-[#f4f4f4] via-[#ebebeb] via-50% to-[#cfcfcf] shadow-[inset_0_0_0_1px_#fafafa]"
          >
            Cancel
          </button>
        </div>
      </div>
    </section>
  );
}

/* ---------- Taskbar ---------- */

function StartOrb() {
  return (
    <svg viewBox="0 0 38 38" className="size-[38px]" aria-hidden="true">
      <defs>
        <radialGradient id="orb" cx="0.5" cy="0.95" r="0.9">
          <stop offset="0" stopColor="#46dcf2" />
          <stop offset="0.45" stopColor="#17699e" />
          <stop offset="1" stopColor="#5f84a3" />
        </radialGradient>
      </defs>
      <circle cx="19" cy="19" r="17.500" fill="url(#orb)" stroke="#214b6c" />
      <path d="M3 17C5 6 13 3 19 3s14 4 16 13c-9-4-22-3-32 1z" fill="#fff" opacity="0.3" />
      <path d="M11 11c3-2 5-2 8-1l-2 8c-3-1-5-1-8 1z" fill="#ee602b" />
      <path d="M20 11c3 1 5 1 9-1l-2 8c-3 2-6 2-9 1z" fill="#90cb3c" />
      <path d="M9 20c3-1 5-2 8-1l-2 8c-3-1-5-1-8 1z" fill="#3f9de0" />
      <path d="M18 20c3 1 5 1 9-1l-2 9c-3 1-6 1-9 0z" fill="#ffc931" />
    </svg>
  );
}

function InternetExplorerIcon() {
  return (
    <svg viewBox="0 0 34 34" className="size-[34px]" aria-hidden="true">
      <path d="M29 22a11 11 0 1 1 1-5H11" fill="none" stroke="#2793d4" strokeWidth="6" />
      <path d="M28 22a10.500 10.500 0 1 1 1-5.500H11" fill="none" stroke="#62ccf5" strokeWidth="3.500" />
      <path d="M4 30C-1 27 8 12 18 6c6-4 12-5 12-2" fill="none" stroke="#eebd21" strokeWidth="3" />
    </svg>
  );
}

function LibraryFolderIcon() {
  return (
    <svg viewBox="0 0 36 34" className="h-[34px] w-9" aria-hidden="true">
      <path d="M4 3h10l2 3h16v24H4z" fill="#e9c95b" stroke="#b9953c" />
      <path d="M2 8h11l2-3h18v26H2z" fill="#f8e995" stroke="#c7ab50" />
      <path d="M7 5h3M14 4h3M24 6h5" stroke="#4d925a" strokeWidth="2" />
      <path d="M3 13h29" stroke="#fff9ca" strokeWidth="2" />
      <path d="M8 31V20h20v11" fill="none" stroke="#409bcc" strokeWidth="5" />
      <path d="M8 31V20h20v11" fill="none" stroke="#a5e5f8" strokeWidth="3" />
    </svg>
  );
}

function MediaPlayerIcon() {
  return (
    <svg viewBox="0 0 28 28" className="size-7" aria-hidden="true">
      <path d="M2 4h19v20H2z" fill="#dceaf4" stroke="#85a5be" />
      <path d="M22 4h2v20h-2M25 3h2v21h-2" fill="#76aed8" stroke="#4c82ae" strokeWidth="0.7" />
      <circle cx="11" cy="14" r="9" fill="#ee7b1d" stroke="#b35917" />
      <path d="M8 9l9 5-9 5z" fill="#fff" />
    </svg>
  );
}

function BlueDocIcon() {
  return (
    <svg viewBox="0 0 26 32" className="h-8 w-[26px]" aria-hidden="true">
      <path d="M1 1h18l6 6v24H1z" fill="#dce9fa" stroke="#8ea6c8" />
      <path d="M25 7v24H3" fill="none" stroke="#5f7ba6" />
      <path d="M19 1v6h6" fill="#567fae" stroke="#4e6f9c" />
      <path d="M14 2L2 26V2z" fill="#fff" opacity="0.6" />
    </svg>
  );
}

const tasks: { name: string; icon: ReactNode; open: boolean }[] = [
  { name: "Internet Explorer", icon: <InternetExplorerIcon />, open: false },
  { name: "Firefox", icon: <FirefoxIcon className="size-8" />, open: false },
  { name: "Windows Explorer", icon: <LibraryFolderIcon />, open: true },
  { name: "Media Player", icon: <MediaPlayerIcon />, open: false },
  { name: "Supermium", icon: <SupermiumIcon className="size-[34px]" />, open: true },
  { name: "Open file", icon: <BlueDocIcon />, open: true },
];

function Taskbar() {
  return (
    <footer className="relative flex h-10 shrink-0 items-stretch border-t border-[#35516f] bg-linear-to-r from-[#8495b4] via-[#a9bfdb] via-15% to-[#a9c2df] shadow-[inset_0_1px_0_#c9d8ea]">
      <button type="button" aria-label="Start" className="flex w-[54px] items-center justify-center">
        <StartOrb />
      </button>
      <ul className="ml-[5px] flex gap-[2px]">
        {tasks.map((t) => (
          <li key={t.name} className="flex">
            <button
              type="button"
              aria-label={t.name}
              className={
                t.open
                  ? "flex w-[60px] items-center justify-center rounded-[3px] border border-[#435772] bg-linear-to-b from-[#dbe3ee] to-[#bac9dd] shadow-[inset_0_0_0_1px_#eef3f9]"
                  : "flex w-[60px] items-center justify-center"
              }
            >
              {t.icon}
            </button>
          </li>
        ))}
      </ul>
      <div className="ml-auto flex items-center bg-linear-to-r from-transparent via-[#7f92ad] via-20% to-[#7c8ea9] pl-[41px] text-white">
        <svg viewBox="0 0 8 4" className="mr-3 h-1 w-2" role="img" aria-label="Show hidden icons">
          <path d="M0 4l4-4 4 4z" fill="#fff" />
        </svg>
        <svg viewBox="0 0 16 16" className="mr-[9px] size-4" role="img" aria-label="Action Center">
          <path d="M2 1v15" stroke="#fff" strokeWidth="1.500" />
          <path d="M4 2h5v2h6l-3 2 3 3H9V7H4z" fill="#fff" />
        </svg>
        <svg viewBox="0 0 16 16" className="mr-[9px] size-4" role="img" aria-label="Network">
          <path d="M5 4h10v8H5zM7 15h7M10 12v3" fill="#75869f" stroke="#fff" strokeWidth="1.500" />
          <path d="M1 1v4h4V1M3 5v9h3M3 0v4" fill="none" stroke="#fff" strokeWidth="1.200" />
        </svg>
        <svg viewBox="0 0 16 16" className="mr-[15px] size-4" role="img" aria-label="Muted">
          <path d="M0 5h2l4-4v13l-4-4H0z" fill="#fff" />
          <circle cx="11" cy="10" r="5" fill="#d4373c" />
          <path d="M9 8l4 4M13 8l-4 4" stroke="#fff" strokeWidth="1.500" />
        </svg>
        <time className="text-center leading-[17px] whitespace-nowrap">
          11:35 PM
          <br />
          8/29/2024
        </time>
        <button
          type="button"
          aria-label="Show desktop"
          className="ml-2 h-full w-4 border-l border-[#4d5f79] bg-linear-to-br from-[#a7b5c8] via-[#60728c] to-[#8fa0b8]"
        />
      </div>
    </footer>
  );
}

export default function App() {
  return (
    <main className="relative flex h-screen min-h-[720px] flex-col overflow-hidden font-['Open_Sans','Noto_Sans',sans-serif] text-[11px] text-black">
      <Wallpaper />
      <div className="relative min-h-0 flex-1">
        <DesktopShortcuts />
        <BrowserWindow />
        <ExplorerWindow />
        <OpenWithDialog />
        <svg viewBox="0 0 12 19" className="absolute top-[235px] left-[368px] h-[19px] w-3" aria-hidden="true">
          <path d="M.5.500v15.500l3.500-3.500 2.500 6 2.500-1-2.500-6h5z" fill="#fff" stroke="#000" />
        </svg>
      </div>
      <Taskbar />
    </main>
  );
}
